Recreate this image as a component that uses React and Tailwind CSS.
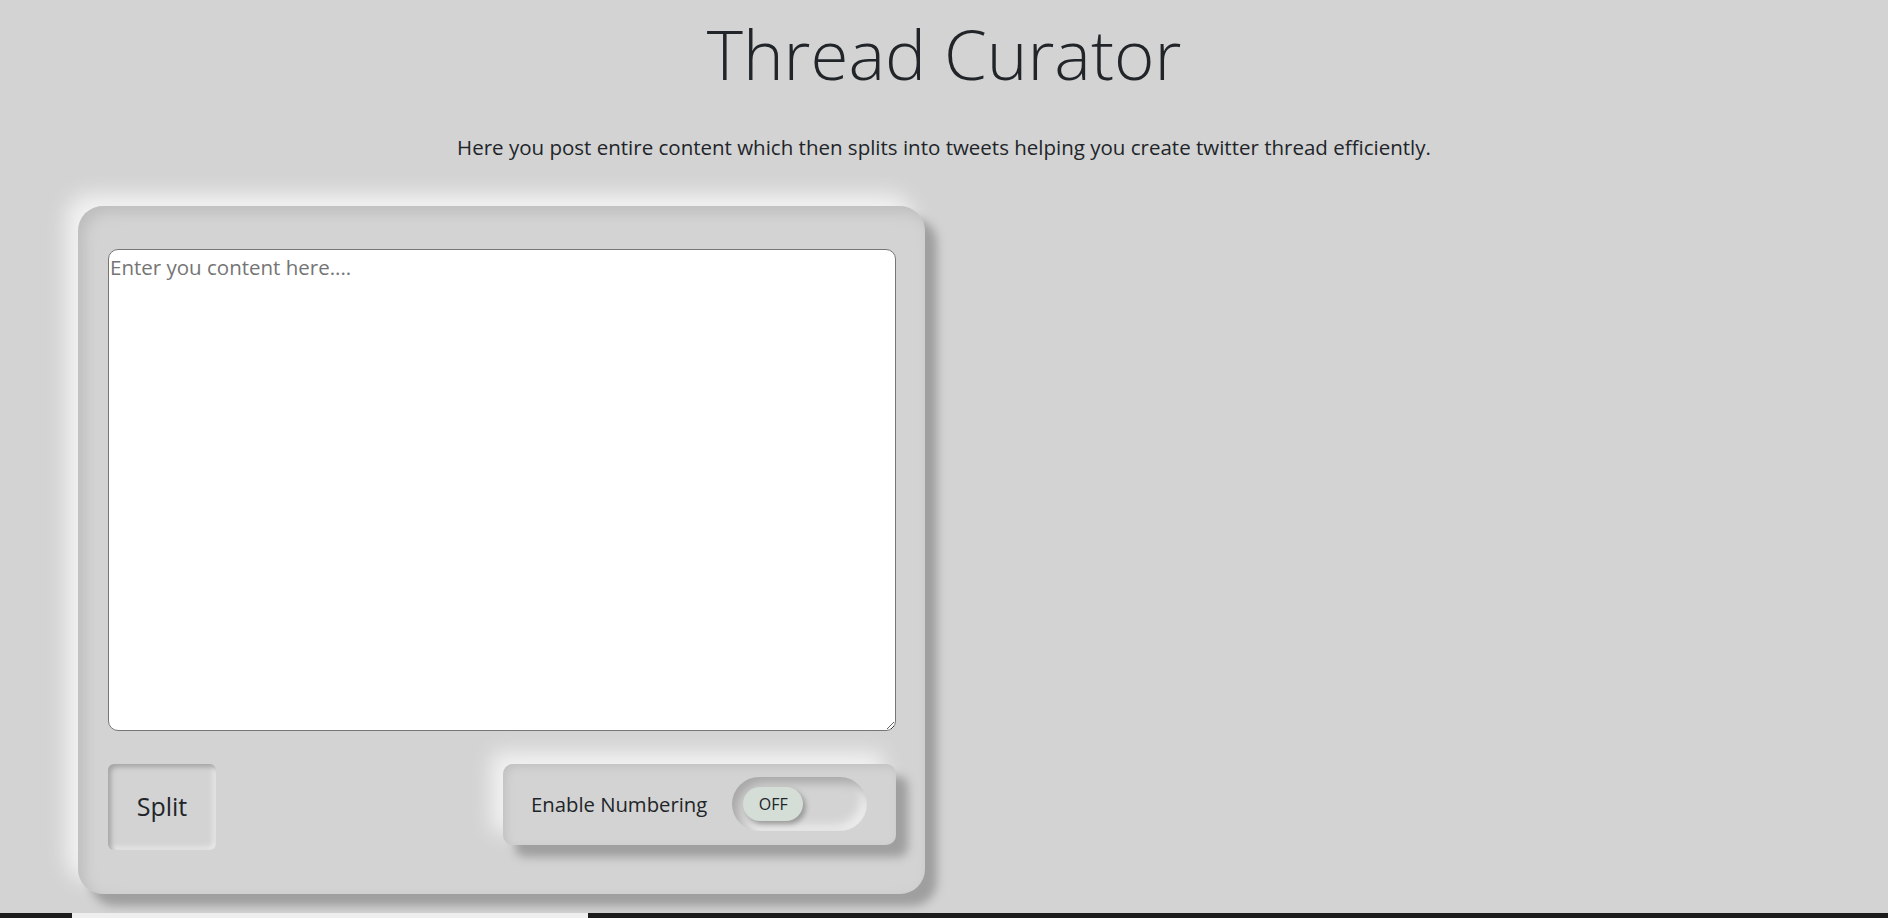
import { useState } from "react";

const font = { fontFamily: '"Open Sans", "Noto Sans", sans-serif' };

const NumberToggle = ({ on, onToggle }) => {
  return (
    <button
      onClick={onToggle}
      className="flex items-center w-[135px] h-[54px] rounded-full bg-[#d3d3d3] px-[11px] shadow-[inset_6px_6px_10px_#a9a9a9,inset_-6px_-6px_10px_#ececec]"
    >
      <span
        className={`flex items-center justify-center w-[60px] h-[34px] rounded-full bg-[#d4ddd6] text-[16px] text-[#212529] shadow-[3px_3px_5px_#9a9a9a] ${
          on ? "ml-auto" : ""
        }`}
      >
        {on ? "ON" : "OFF"}
      </span>
    </button>
  );
};

const App = () => {
  const [content, setContent] = useState("");
  const [numbering, setNumbering] = useState(false);

  return (
    <div className="flex flex-col h-[918px] bg-[#d3d3d3] text-[#212529] overflow-hidden" style={font}>
      <h1 className="text-center font-light text-[69px] leading-none pt-[19px]">Thread Curator</h1>
      <p className="text-center text-[20.5px] mt-[44px]">
        Here you post entire content which then splits into tweets helping you create twitter thread efficiently.
      </p>

      <div className="ml-[78px] mt-[43px] w-[847px] h-[688px] rounded-[25px] bg-[#d3d3d3] pt-[43px] pl-[30px] pr-[29px] shadow-[inset_6px_6px_14px_#bdbdbd,12px_12px_10px_#9f9f9f,-12px_-12px_20px_#f2f2f2]">
        <textarea
          value={content}
          onChange={(e) => setContent(e.target.value)}
          placeholder="Enter you content here...."
          className="block w-[788px] h-[482px] rounded-[10px] border border-[#767676] bg-white px-[1px] py-[2px] text-[20.5px] placeholder:text-[#757575] outline-none"
        />

        <div className="flex items-start justify-between mt-[33px]">
          <button className="w-[108px] h-[86px] rounded-[6px] bg-[#d3d3d3] text-[25px] shadow-[inset_3px_3px_5px_#a4a4a4,inset_-3px_-3px_5px_#e9e9e9]">
            Split
          </button>

          <div className="flex items-center w-[393px] h-[81px] rounded-[10px] bg-[#d3d3d3] pl-[28px] shadow-[inset_3px_3px_8px_#c0c0c0,12px_12px_10px_#9f9f9f,-12px_-12px_20px_#f2f2f2]">
            <span className="text-[20.3px] mr-[25px]">Enable Numbering</span>
            <NumberToggle on={numbering} onToggle={() => setNumbering(!numbering)} />
          </div>
        </div>
      </div>

      <div className="flex mt-auto h-[5px] bg-[#1c1c1c]">
        <div className="ml-[72px] w-[516px] bg-[#efefef]" />
      </div>
    </div>
  );
};

export default App;
